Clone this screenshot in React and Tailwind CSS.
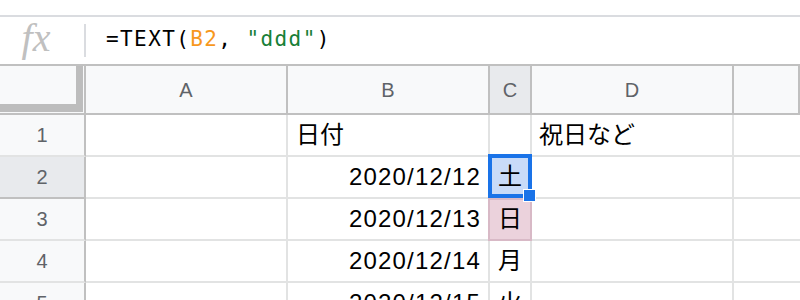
import React from "react";

const cols = ["A", "B", "C", "D", ""];

const rows = [
  { n: 1, b: "日付", bAlign: "left", c: "", d: "祝日など" },
  { n: 2, b: "2020/12/12", c: "土", d: "" },
  { n: 3, b: "2020/12/13", c: "日", d: "" },
  { n: 4, b: "2020/12/14", c: "月", d: "" },
  { n: 5, b: "2020/12/15", c: "火", d: "" },
];

const cellFont = {
  fontFamily: '"Liberation Sans", "Noto Sans CJK JP", sans-serif',
};

export default function App() {
  return (
    <div
      className="w-[800px] h-[300px] overflow-hidden bg-white text-black"
      style={cellFont}
    >
      {/* top strip */}
      <div className="h-[17px] border-b-2 border-[#dadce0]" />

      {/* formula bar */}
      <div className="h-[49px] flex items-center border-b-2 border-[#c0c0c0]">
        <div className="w-[84px] flex justify-center">
          <span
            className="text-[40px] italic text-[#c0c0c0] leading-none pr-[12px] pb-[6px]"
            style={{ fontFamily: '"Liberation Serif", serif' }}
          >
            fx
          </span>
        </div>
        <div className="w-[2px] h-[33px] bg-[#dadce0]" />
        <div
          className="pl-[20px] text-[21px] tracking-[1.4px] leading-none pb-[2px]"
          style={{ fontFamily: '"DejaVu Sans Mono", monospace' }}
        >
          =TEXT(<span className="text-[#f7981d]">B2</span>,{" "}
          <span className="text-[#188038]">"ddd"</span>)
        </div>
      </div>

      {/* grid */}
      <div className="grid grid-cols-[86px_202px_202px_42px_202px_1fr] text-[24px]">
        {/* header row */}
        <div className="h-[49px] bg-[#f8f9fa] border-b-2 border-r-2 border-[#c0c0c0] flex">
          <div className="w-[76px] h-[38px] border-r-[7px] border-b-[8px] border-[#bdbdbd] box-content" />
        </div>
        {cols.map((c, i) => (
          <div
            key={i}
            className={
              "h-[49px] flex items-center justify-center border-b-2 border-r-2 border-[#c0c0c0] text-[20px] text-[#5f6368] " +
              (c === "C" ? "bg-[#e8eaed]" : "bg-[#f8f9fa]")
            }
          >
            {c}
          </div>
        ))}

        {rows.map((r) => (
          <React.Fragment key={r.n}>
            <div
              className={
                "h-[42px] flex items-center justify-center border-b-2 border-r-2 text-[20px] text-[#5f6368] " +
                (r.n === 2
                  ? "bg-[#e8eaed] border-b-[#c0c0c0] border-r-[#c0c0c0]"
                  : "bg-[#f8f9fa] border-b-[#e2e3e3] border-r-[#c0c0c0]")
              }
            >
              {r.n}
            </div>
            <div className="h-[42px] border-b-2 border-r-2 border-[#e2e3e3]" />
            <div
              className={
                "h-[42px] flex items-center border-b-2 border-r-2 border-[#e2e3e3] " +
                (r.bAlign === "left"
                  ? "justify-start pl-[8px]"
                  : "justify-end pr-[7px] tracking-[1.2px]")
              }
            >
              {r.b}
            </div>
            <div
              className={
                "relative h-[42px] flex items-center justify-center border-b-2 border-r-2 border-[#e2e3e3] " +
                (r.n === 2 ? "bg-[#c9dbf8]" : r.n === 3 ? "bg-[#ebd2dc]" : "")
              }
            >
              {r.n === 3 && (
                <div className="absolute -left-[2px] -top-[1px] w-[44px] h-[43px] border-2 border-[#d8b9c6]" />
              )}
              <span className="relative">{r.c}</span>
              {r.n === 2 && (
                <>
                  <div className="absolute -left-[2px] -top-[3px] w-[44px] h-[44px] border-[4px] border-[#1a73e8] z-10" />
                  <div className="absolute left-[33px] top-[32px] w-[13px] h-[13px] bg-[#1a73e8] border border-white z-20" />
                </>
              )}
            </div>
            <div className="h-[42px] flex items-center justify-start pl-[7px] border-b-2 border-r-2 border-[#e2e3e3]">
              {r.d}
            </div>
            <div className="h-[42px] border-b-2 border-[#e2e3e3]" />
          </React.Fragment>
        ))}
      </div>
    </div>
  );
}
